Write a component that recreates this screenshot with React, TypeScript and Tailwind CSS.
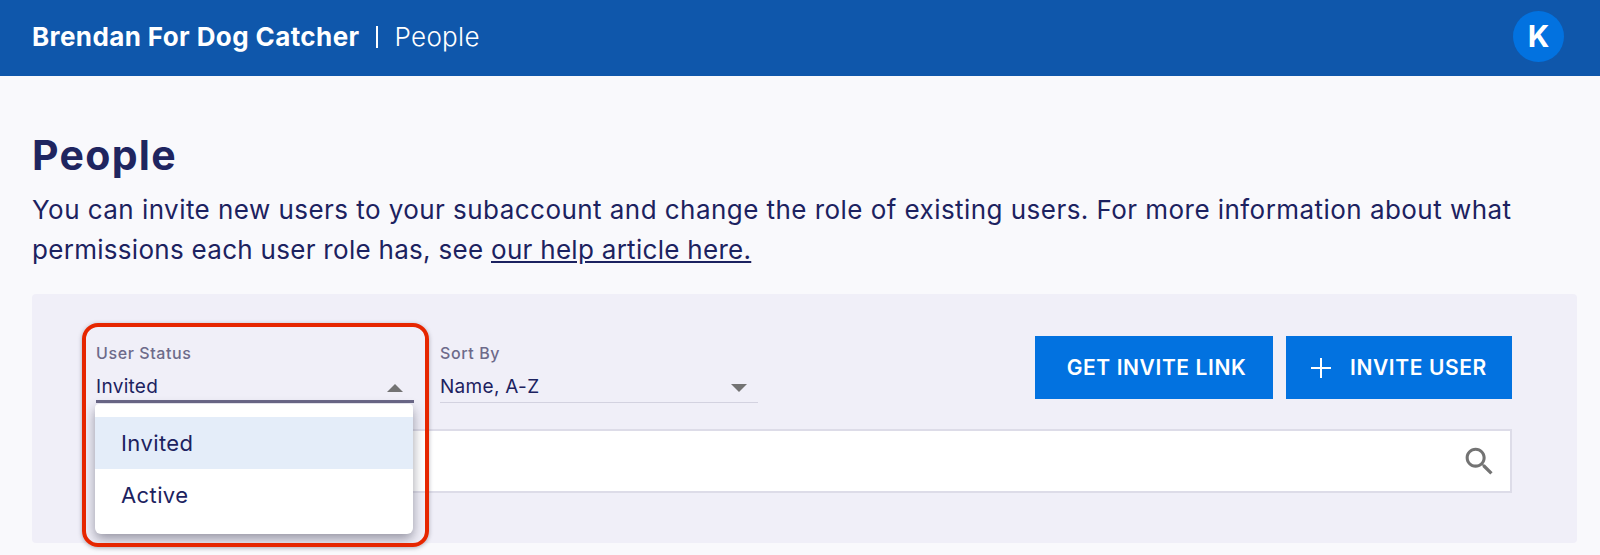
const font = "font-['Inter','Liberation_Sans',sans-serif]";

function SelectField({ label, value, open }: { label: string; value: string; open?: boolean }) {
  return (
    <div className="w-[318px]">
      <p className="h-[17px] text-[16px] leading-[17px] font-medium tracking-[0.6px] text-[#6d6a8a]">{label}</p>
      <div
        className={
          open
            ? "mt-[11px] flex h-[30px] items-center justify-between border-b-[3px] border-[#6b6888] pr-[11px] pt-[2px]"
            : "mt-[11px] flex h-[30px] items-center justify-between border-b border-[#d3d2e0] pr-[11px]"
        }
      >
        <span className="text-[19px] tracking-[0.3px] text-[#1c2260]">{value}</span>
        <svg width="16" height="8" viewBox="0 0 16 8" className="fill-[#737373]">
          {open ? <path d="M8 0 16 8H0Z" /> : <path d="M0 0h16L8 8Z" />}
        </svg>
      </div>
    </div>
  );
}

export default function App() {
  return (
    <div className={`h-[555px] w-[1600px] overflow-hidden bg-[#f9f9fc] ${font}`}>
      <header className="flex h-[76px] items-center justify-between bg-[#0f57ab] pb-[3px] pl-[32px] pr-[36px] text-white">
        <div className="flex items-center text-[26px]">
          <span className="font-bold tracking-[0.4px]">Brendan For Dog Catcher</span>
          <span className="ml-[16px] mr-[17px] h-[22px] w-[2px] bg-white" />
          <span className="font-light tracking-[0.3px]">People</span>
        </div>
        <div className="flex h-[51px] w-[51px] items-center justify-center rounded-full bg-[#0272e0] text-[30px] font-bold">
          K
        </div>
      </header>

      <main className="pt-[52px]">
        <div className="pl-[32px]">
          <h1 className="text-[41px] leading-[54px] font-bold tracking-[1.3px] text-[#1f2560]">People</h1>
          <p className="mt-[8px] text-[26px] leading-[40px] tracking-[0.45px] whitespace-nowrap text-[#1c2260]">
            You can invite new users to your subaccount and change the role of existing users. For more information about what
            <br />
            <span className="tracking-[0.29px]">
              permissions each user role has, see <a className="underline">our help article here.</a>
            </span>
          </p>
        </div>

        <section className="relative ml-[32px] mr-[23px] mt-[24px] h-[249px] rounded bg-[#f0eff8] pl-[64px] pr-[65px] pt-[42px]">
          <div className="flex items-start justify-between">
            <div className="flex gap-[26px] pt-[9px]">
              <SelectField label="User Status" value="Invited" open />
              <SelectField label="Sort By" value="Name, A-Z" />
            </div>
            <div className="flex gap-[13px] text-[21px] font-semibold tracking-[0.6px] text-white">
              <button className="flex h-[63px] w-[238px] items-center justify-center bg-[#0272e0] pl-[5px]">GET INVITE LINK</button>
              <button className="flex h-[63px] w-[226px] items-center gap-[19px] bg-[#0272e0] pl-[25px]">
                <svg width="20" height="20" viewBox="0 0 20 20" className="fill-white">
                  <path d="M9 0h2v9h9v2h-9v9H9v-9H0V9h9Z" />
                </svg>
                INVITE USER
              </button>
            </div>
          </div>

          <div className="mt-[26px] flex h-[64px] items-center justify-end border-2 border-[#dddce8] bg-white pr-[12px]">
            <svg width="37" height="37" viewBox="0 0 24 24" className="fill-[#737373]">
              <path d="M15.5 14h-.79l-.28-.27C15.41 12.59 16 11.11 16 9.5 16 5.91 13.09 3 9.5 3S3 5.91 3 9.5 5.91 16 9.5 16c1.61 0 3.09-.59 4.23-1.57l.27.28v.79l5 4.99L20.49 19l-4.99-5zm-6 0C7.01 14 5 11.99 5 9.5S7.01 5 9.5 5 14 7.01 14 9.5 11.99 14 9.5 14z" />
            </svg>
          </div>

          <div className="absolute left-[63px] top-[110px] z-10 h-[130px] w-[318px] rounded-b-[6px] rounded-t-[4px] bg-white pt-[13px] text-[22px] tracking-[0.4px] text-[#1c2260] shadow-[0_5px_12px_rgba(40,40,60,0.45)]">
            <div className="flex h-[52px] items-center bg-[#e4edf9] pl-[26px]">Invited</div>
            <div className="flex h-[52px] items-center pl-[26px]">Active</div>
          </div>

          <div className="absolute left-[50px] top-[29px] z-20 h-[224px] w-[347px] rounded-[16px] border-4 border-[#e62600] shadow-[0_1px_4px_rgba(40,40,60,0.35)]" />
        </section>
      </main>
    </div>
  );
}
